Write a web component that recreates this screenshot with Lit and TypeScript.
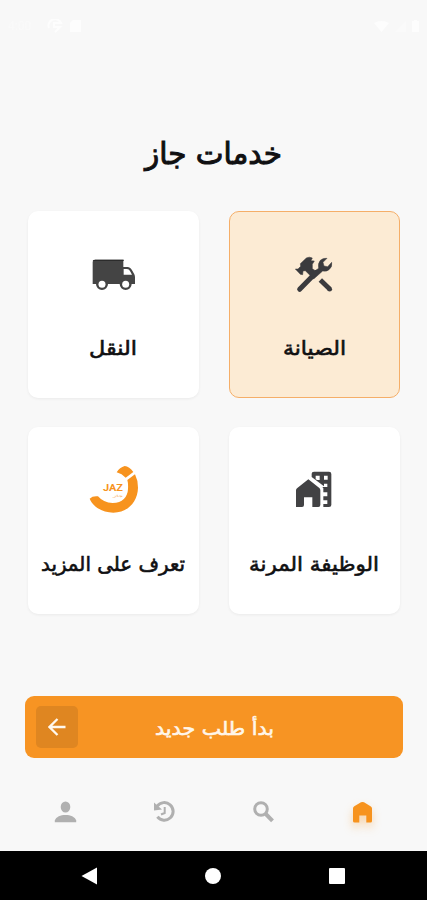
import { LitElement, html, svg, css } from "lit";
import { customElement, property } from "lit/decorators.js";

// One line of Arabic text, fitted to a given width and standing on a fixed baseline.
@customElement("fit-text")
class FitText extends LitElement {
  @property() text = "";
  @property({ type: Number }) size = 20;
  @property({ type: Number }) width = 100;
  static styles = css`
    :host { display: block; }
    svg { display: block; overflow: visible; }
    text {
      font-family: "DejaVu Sans", "Noto Sans", sans-serif;
      font-weight: 400;
      fill: currentColor;
      stroke: currentColor;
      stroke-width: var(--weight, 0.6px);
      direction: rtl;
    }
  `;
  render() {
    return html`<svg width=${this.width} height="40" viewBox="0 0 ${this.width} 40">
      <text x=${this.width / 2} y="28" text-anchor="middle" font-size=${this.size}
        textLength=${this.width} lengthAdjust="spacingAndGlyphs">${this.text}</text>
    </svg>`;
  }
}

const tools = svg`
  <path d="M255 265 L305 214" stroke="#3b3b3e" stroke-width="15" stroke-linecap="round"/>
  <path d="M317 237 L345 264" stroke="#3b3b3e" stroke-width="14.500"/>
  <circle cx="345" cy="264.500" r="7.200" fill="#3b3b3e"/>
  <path fill="#3b3b3e" stroke="#3b3b3e" stroke-width="1.500" stroke-linejoin="round" d="M242 204 L250 204 L258 196 L257 188 L275 171 Q284 166 293 171 L289 179 L299 180 L293 190 L293 203 L302 209 L312 202 Q309 187 317 178 Q326 170 337 172 L325 184 L328 195 L339 197 L351 184 Q354 198 343 206 Q336 212 324 210 L297 234 L272 209 L265 210 L264 221 L257 220 Z"/>`;

const truck = svg`
  <path fill="#444" d="M242 176 H326 V198 H338 Q348 199 353 209 L359 220 Q361 224 361 229 V249 H351 A18 18 0 0 1 315 249 H280 A18 18 0 0 1 244 249 H234 V184 Q234 176 242 176 Z"/>
  <path fill="#2b2b2b" d="M242 176 H327 V180 H234 Q235 176 242 176Z"/>
  <path fill="#fff" d="M327 204 H337 Q343 204 346 210 L352 221 H327 Z"/>
  <circle cx="262" cy="250" r="10.500" fill="#fff"/><circle cx="333" cy="250" r="10.500" fill="#fff"/>`;

const work = svg`
  <path fill="#424244" d="M244 261 V211 Q244 207 248 204 L281 178 L314 204 Q317 207 317 211 V255 Q317 261 311 261 H293 V232 H268 V255 Q268 261 262 261 Z"/>
  <path fill="#424244" fill-rule="evenodd" d="M291 171 V161 Q291 155 298 155 H343 Q350 155 350 162 V255 Q350 261 343 261 H326 V252 H338 V241 H326 V229 H338 V217 H326 V205 L323 201 H338 V191 H328 V199 Z M303 167 V178 L308 180 H315 V167 Z M328 167 V179 H339 V167 Z"/>`;

const logo = svg`
  <path fill="#f7931e" d="M306 157 Q315 142 330 138 Q344 139 356 156 L333 173 Q322 161 306 157 Z"/>
  <path fill="#f7931e" d="M338 180 L361 163 Q370 181 370 203 C369 246 338 278 296 278 C265 278 235 261 225 236 Q234 227 250 229 Q266 248 294 249 C323 249 339 231 340 207 Q341 190 338 180 Z"/>
  <text class="jaz" x="265" y="213" textLength="60" lengthAdjust="spacingAndGlyphs">JAZ</text>
  <text class="sub" x="294" y="231" textLength="31" lengthAdjust="spacingAndGlyphs">جاز</text>`;

@customElement("app-root")
class AppRoot extends LitElement {
  static styles = css`
    :host {
      display: flex; flex-direction: column; box-sizing: border-box;
      width: 427px; height: 900px; overflow: hidden;
      background: #f8f8f8; color: #101012; direction: rtl;
    }
    svg { display: block; }
    .status { height: 52px; padding: 17px 8px 0; box-sizing: border-box; display: flex; justify-content: space-between; direction: ltr; opacity: 0.75; }
    .status div { display: flex; gap: 6px; align-items: center; height: 18px; }
    .clock { font: 12px Roboto, sans-serif; color: #fbfbfb; width: 32px; }
    .title { height: 159px; box-sizing: border-box; padding-top: 84px; display: flex; justify-content: center; --weight: 1px; }
    .grid { display: grid; grid-template-columns: 171px 171px; grid-auto-rows: 187px; gap: 29px 30px; justify-content: center; padding-left: 0.5px; }
    .card {
      box-sizing: border-box; border: 1px solid transparent; border-radius: 10px;
      background: #fff; background-clip: border-box; box-shadow: 0 1px 3px rgba(0, 0, 0, 0.06);
      display: flex; flex-direction: column; align-items: center; padding-top: 33.5px;
    }
    .card.active { background: #fcebd4; border-color: #f5ae68; box-shadow: none; }
    .card fit-text { margin-top: 21.5px; }
    .card.low { padding-top: 32px; }
    .card.low fit-text { margin-top: 23px; }
    .jaz { font: 700 28px Roboto, sans-serif; fill: #f7931e; direction: ltr; }
    .sub { font: 9px "DejaVu Sans", sans-serif; fill: #f7a13e; direction: ltr; }
    .start {
      margin: 82px 24px 0 25px; height: 62px; border-radius: 9px; background: #f79423;
      box-sizing: border-box; padding: 0 11px; display: grid; grid-template-columns: 42px 1fr 42px;
      align-items: center; justify-items: center; color: #fff6ea;
    }
    .start fit-text { margin-top: -1px; --weight: 0.6px; }
    .go { width: 42px; height: 42px; border-radius: 5px; background: #df8621; display: flex; align-items: center; justify-content: center; }
    .tabs { height: 93px; display: flex; justify-content: space-between; padding: 38px 50px 0 51px; box-sizing: border-box; }
    .tabs svg { overflow: visible; }
    .home { filter: drop-shadow(0 5px 5px rgba(247, 147, 30, 0.35)); }
    .system { height: 49px; background: #000; display: flex; justify-content: space-between; align-items: center; direction: ltr; padding: 0 82px 0 81px; box-sizing: border-box; }
  `;

  card(kind: string, box: string, icon: unknown, text: string, width: number) {
    return html`<div class="card ${kind}">
      <svg width="60" height="60" viewBox=${box} fill="none">${icon}</svg>
      <fit-text .text=${text} .size=${20} .width=${width}></fit-text>
    </div>`;
  }

  render() {
    return html`
      <div class="status">
        <div>
          <span class="clock">4:00</span>
          <svg width="18" height="14" viewBox="0 0 18 14"><path d="M3 9 A6 6 0 0 1 15 4 H8 V8 H14 L9 13" fill="none" stroke="#fff" stroke-width="2"/></svg>
          <svg width="11" height="12" viewBox="0 0 11 12"><path d="M0 3 L3 0 H11 V12 H0Z" fill="#fff"/></svg>
        </div>
        <div>
          <svg width="15" height="11" viewBox="0 0 15 11"><path d="M0 2 Q7.500 -2 15 2 L7.500 11Z" fill="#fff"/></svg>
          <svg width="11" height="11" viewBox="0 0 11 11"><path d="M11 0 V11 H0Z" fill="#fbfbfb"/></svg>
          <svg width="7" height="12" viewBox="0 0 7 12"><path d="M0 1 H2 V0 H5 V1 H7 V12 H0Z" fill="#fff"/></svg>
        </div>
      </div>
      <div class="title"><fit-text .text=${"خدمات جاز"} .size=${30} .width=${137}></fit-text></div>
      <div class="grid">
        ${this.card("active", "208 135 180 180", tools, "الصيانة", 63)}
        ${this.card("", "205 135 180 180", truck, "النقل", 48)}
        ${this.card("low", "208 120 180 180", work, "الوظيفة المرنة", 130)}
        ${this.card("low", "205 120 180 180", logo, "تعرف على المزيد", 144)}
      </div>
      <div class="start">
        <span></span>
        <fit-text .text=${"بدأ طلب جديد"} .size=${19} .width=${119}></fit-text>
        <div class="go"><svg width="18" height="18" viewBox="0 0 18 18" fill="none" stroke="#fff8ee" stroke-width="2.300"><path d="M17.500 9 H2 M9.500 1 L1.500 9 L9.500 17"/></svg></div>
      </div>
      <div class="tabs">
        <svg class="home" width="29" height="30" viewBox="0 0 29 30"><path fill="#f7931e" d="M5 25 V12.500 Q5 11 6.300 10.200 L13 6.300 Q14.500 5.500 16 6.300 L22.500 10.200 Q24 11 24 12.500 V25 Q24 26.500 22.500 26.500 H18.300 V19.500 H11.300 V26.500 H6.500 Q5 26.500 5 25 Z"/></svg>
        <svg width="29" height="30" viewBox="0 0 29 30" fill="none" stroke="#b0b0b0"><circle cx="12" cy="13" r="6.300" stroke-width="3"/><path d="M16.800 18 L23.500 24.800" stroke-width="4"/></svg>
        <svg width="29" height="30" viewBox="0 0 29 30" fill="none" stroke="#b0b0b0"><path d="M7.200 10.200 A8.800 8.800 0 1 1 7.400 20.800" stroke-width="3"/><path d="M14.700 11 V17 L11 18.500" stroke-width="2"/><path d="M4 6.500 L4 14.500 L12 13.500 Z" fill="#b0b0b0" stroke="none"/></svg>
        <svg width="29" height="30" viewBox="0 0 29 30" fill="#b0b0b0"><ellipse cx="14.500" cy="11" rx="4.800" ry="5.600"/><path d="M3.800 26.200 V24.500 C5 20.800 9.500 19 14.500 19 S24 20.800 25.200 24.500 V26.200Z"/></svg>
      </div>
      <div class="system">
        <svg width="16" height="18" viewBox="0 0 16 18"><path d="M0.500 9 L16 0.500 V17.500Z" fill="#fff"/></svg>
        <svg width="16" height="16" viewBox="0 0 16 16"><circle cx="8" cy="8" r="8" fill="#fff"/></svg>
        <svg width="16" height="16" viewBox="0 0 16 16"><rect width="16" height="16" rx="1" fill="#fff"/></svg>
      </div>`;
  }
}
